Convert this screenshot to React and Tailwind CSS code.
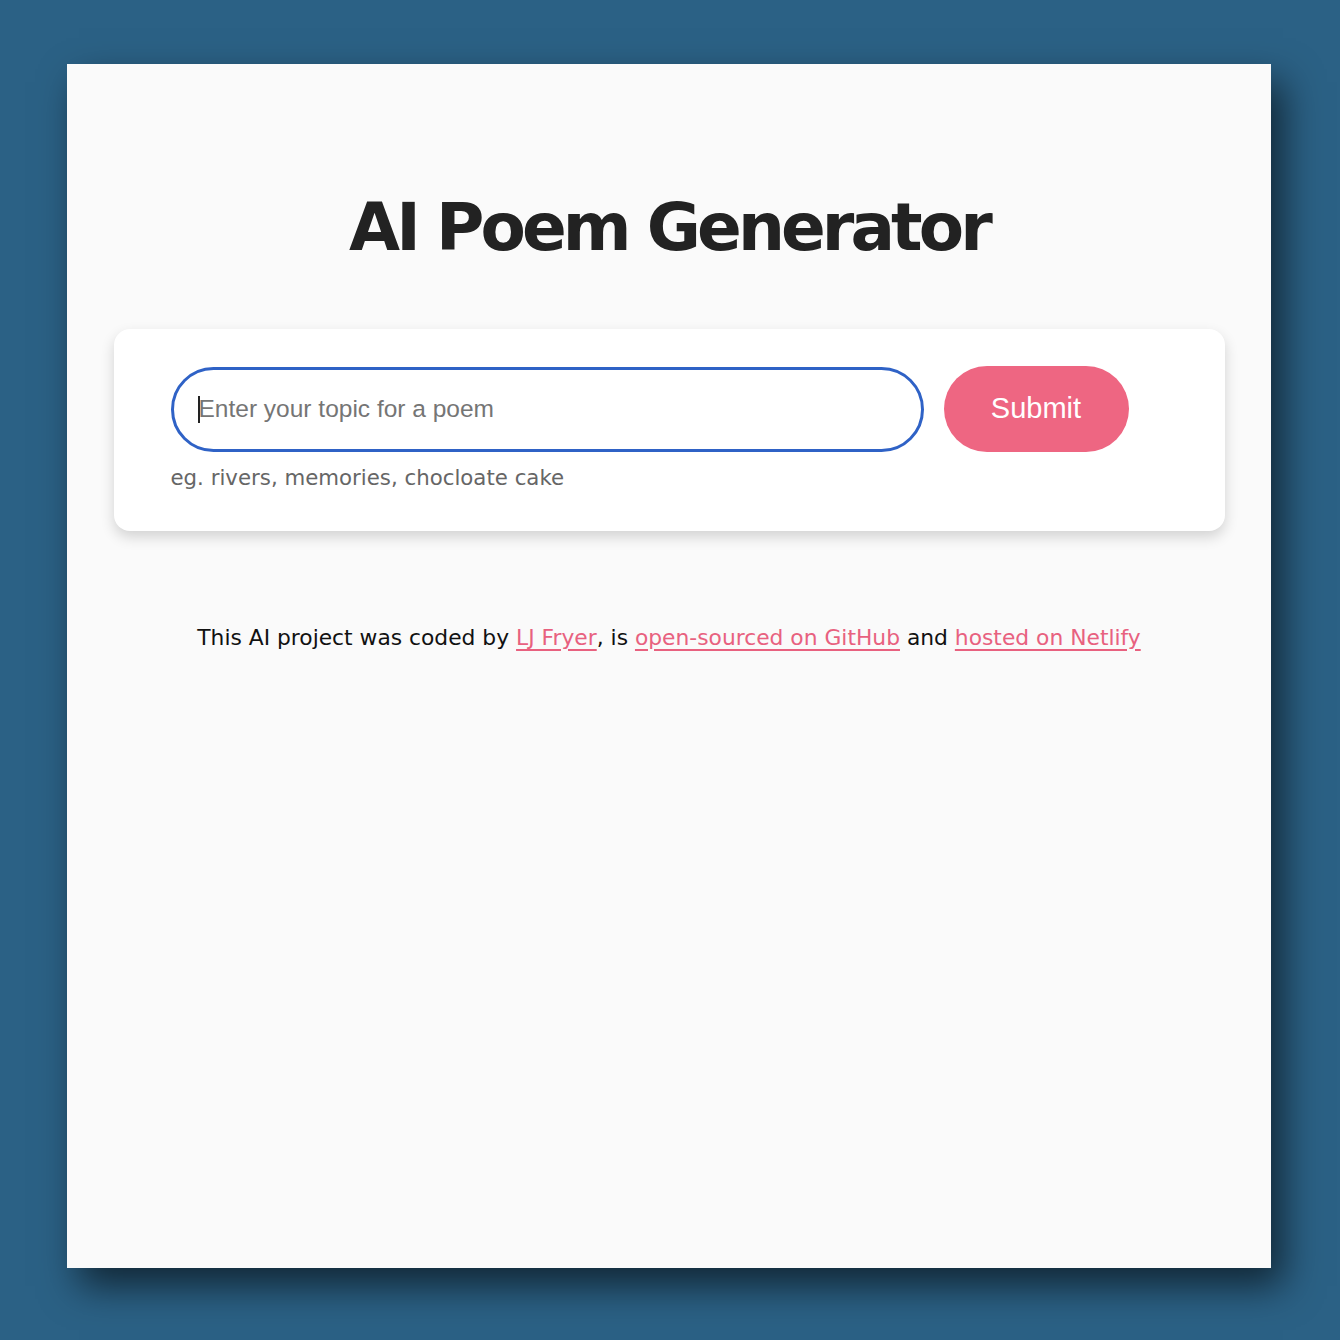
export default function App() {
  const lucida = { fontFamily: '"DejaVu Sans", "Noto Sans", sans-serif' };
  return (
    <div className="w-full min-h-[1340px] bg-[#2b6185] pt-[64px] pl-[67px]">
      <div className="w-[1204px] h-[1204px] bg-[#fafafa] shadow-[12px_18px_36px_rgba(0,0,0,0.6)] flex flex-col items-center">
        <h1
          className="mt-[124px] text-[66px] leading-[80px] font-bold tracking-[-3.9px] text-[#222222]"
          style={lucida}
        >
          AI Poem Generator
        </h1>
        <div className="mt-[61px] w-[1111px] bg-white rounded-[16px] shadow-[0_6px_14px_rgba(0,0,0,0.16)] pl-[57px] pt-[37px] pb-[41px]">
          <div className="flex items-center gap-[20px]">
            <div className="relative">
              <input
                type="text"
                placeholder="Enter your topic for a poem"
                className="w-[753px] h-[85px] rounded-full border-[3px] border-[#2f62c6] bg-white pl-[25px] text-[24.5px] text-[#222] placeholder:text-[#757575] outline-none"
                style={{ fontFamily: '"Liberation Sans", Arial, sans-serif' }}
              />
              <span className="absolute left-[27px] top-[29px] w-[2px] h-[27px] bg-[#222]" />
            </div>
            <button
              className="w-[185px] h-[86px] rounded-full bg-[#ee6682] text-white text-[29px]"
              style={{ fontFamily: '"Liberation Sans", Arial, sans-serif' }}
            >
              Submit
            </button>
          </div>
          <div className="mt-[14px] text-[21.3px] leading-[24px] text-[#666666]" style={lucida}>
            eg. rivers, memories, chocloate cake
          </div>
        </div>
        <p className="mt-[95px] text-[21.8px] leading-[24px] text-[#111111]" style={lucida}>
          This AI project was coded by{" "}
          <a href="#" className="text-[#e8617f] underline underline-offset-[4px]">LJ Fryer</a>, is{" "}
          <a href="#" className="text-[#e8617f] underline underline-offset-[4px]">open-sourced on GitHub</a> and{" "}
          <a href="#" className="text-[#e8617f] underline underline-offset-[4px]">hosted on Netlify</a>
        </p>
      </div>
    </div>
  );
}
